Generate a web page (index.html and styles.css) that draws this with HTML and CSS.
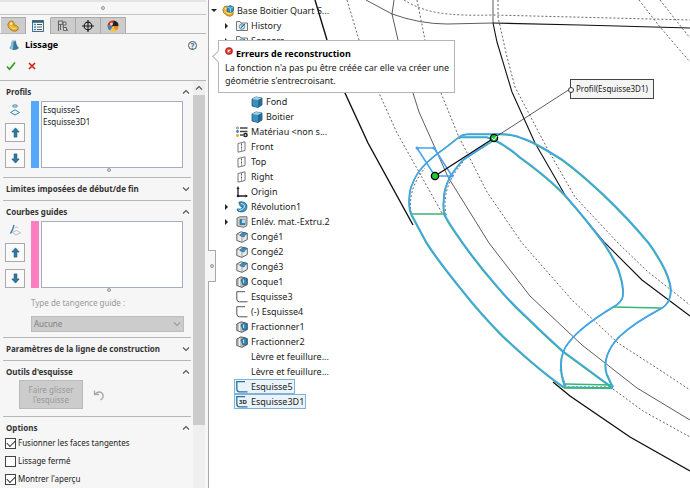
FILE: index.html
```html
<!DOCTYPE html>
<html lang="fr">
  <head>
    <meta charset="utf-8">
    <title>Lissage</title>
    <link rel="stylesheet" href="styles.css">
  </head>
  <body>
    <svg class="defs" aria-hidden="true">
      <symbol id="up" viewBox="0 0 12 12"><path d="M6 1 L10 5.5 H7.500 V11 H4.500 V5.500 H2 Z" fill="#2b7ba6" stroke="#174f72" stroke-width=".7"/></symbol>
      <symbol id="down" viewBox="0 0 12 12"><path d="M6 11 L10 6.500 H7.500 V1 H4.500 V6.500 H2 Z" fill="#2b7ba6" stroke="#174f72" stroke-width=".7"/></symbol>
      <symbol id="chevron" viewBox="0 0 8 6"><path d="M1 4.500 L4 1.500 L7 4.500" fill="none" stroke="#555" stroke-width="1.100"/></symbol>
      <symbol id="part" viewBox="0 0 12 12"><path d="M.8 4.500 L2.500 1.500 L5 1 L7 2.500 L7 5 L9.500 5.500 L11.300 7.500 L10.800 10 L8 11.300 L5 10.500 L1.500 7.500 Z" fill="#eeb02a" stroke="#9c6c10" stroke-width=".8"/><path d="M2.500 6 L6 8.500 L9.500 8" fill="none" stroke="#fbe08a"/><circle cx="4.200" cy="3.800" r="1.200" fill="#fff0b5"/></symbol>
      <symbol id="folder" viewBox="0 0 12 12"><path d="M.5 10.500 V1.500 H4 L5 3 H11.500 V10.500 Z" fill="#f2f2f2" stroke="#666" stroke-width=".9"/><circle cx="6" cy="6.600" r="2.700" fill="#d6ebf5" stroke="#37789a" stroke-width=".8"/><path d="M6 5 V7 L4.500 8 M9 4 L6 7" fill="none" stroke="#205d80" stroke-width=".9"/></symbol>
      <symbol id="body" viewBox="0 0 12 12"><path d="M1 3 L5 1 L11 2 V9 L7 11.500 L1 10 Z" fill="#3d8fb9" stroke="#1c5878" stroke-width=".8"/><path d="M1 3 L5 1 L11 2 L7 4 Z" fill="#9ed3ec"/><path d="M7 4 V11.500 L11 9 V2 Z" fill="#246c93"/></symbol>
      <symbol id="material" viewBox="0 0 12 12"><path d="M4 2 H11.500 M4 5.500 H11.500 M4 9 H7" stroke="#444" stroke-width="1.300"/><circle cx="1.500" cy="2" r="1" fill="#fff" stroke="#555" stroke-width=".7"/><circle cx="1.500" cy="5.500" r="1.400" fill="#3387b8"/><circle cx="1.500" cy="9.500" r="1.400" fill="#e2aa20"/><circle cx="9.500" cy="9" r="1.600" fill="#fff" stroke="#222" stroke-width="1.500"/></symbol>
      <symbol id="plane" viewBox="0 0 12 12"><path d="M2 2.500 L9 .8 V9.500 L2 11.200 Z" fill="#fff" stroke="#777"/><path d="M5.500 2.500 V9.500" stroke="#555" stroke-dasharray="2 1"/></symbol>
      <symbol id="origin" viewBox="0 0 12 12"><path d="M2 2 V10 H11" fill="none" stroke="#222" stroke-width="1.300"/><path d="M.5 3 L2 0 L3.500 3 Z M9.500 8.500 L12 10 L9.500 11.500 Z" fill="#222"/><circle cx="2" cy="10" r="1.300" fill="#222"/></symbol>
      <symbol id="revolve" viewBox="0 0 12 12"><path d="M3 1 Q10 0 11 5 Q11 11 5 11 Q1 11 1 8 Q5 9 7 6 Q3 6 3 1 Z" fill="#3d94bd" stroke="#1f6182" stroke-width=".8"/><path d="M5 2.500 Q9 3 8.500 6 Q7 9 3 9.500" fill="none" stroke="#c5e8f6"/></symbol>
      <symbol id="cut" viewBox="0 0 12 12"><path d="M1 2 L4 .7 H11 V9.500 L8 11.300 L1 10 Z" fill="#c9cdd0" stroke="#555" stroke-width=".8"/><path d="M4 3.500 H9 V8.500 H4 Z" fill="#3b8ab2" stroke="#215571" stroke-width=".6"/><path d="M6 3.500 H9 V7 H6 Z" fill="#b5dff2"/></symbol>
      <symbol id="fillet" viewBox="0 0 12 12"><path d="M.8 3 L5 .8 L11.300 2.500 V8.500 L6 11.400 L.8 9.500 Z" fill="#e8eaeb" stroke="#555" stroke-width=".9"/><path d="M4 4 Q6 1.500 8 1.500 L11.300 2.500 Q8.500 3.500 8 6 L4.500 5 Z" fill="#3b92bf" stroke="#1e5b7a" stroke-width=".6"/><path d="M6 6 V11 M.8 3 L4 4" stroke="#888" stroke-width=".7"/></symbol>
      <symbol id="shell" viewBox="0 0 12 12"><path d="M.8 3 L5 .8 L11.300 2.500 V8.500 L6 11.400 L.8 9.500 Z" fill="#b9bdc0" stroke="#555" stroke-width=".9"/><path d="M5 4 L8 1.700 L11 3 V8.500 L7 9 Z" fill="#378ab5" stroke="#1e5370" stroke-width=".7"/><path d="M3.500 2.500 V10" stroke="#f2f2f2" stroke-width="1.300"/><path d="M7.500 3.500 V7" stroke="#b9e0f1"/></symbol>
      <symbol id="sketch" viewBox="0 0 12 12"><path d="M9 .7 H.8 V8 Q.8 10.800 3.500 10.800 H11.500" fill="none" stroke="#555"/></symbol>
      <symbol id="sketch-on" viewBox="0 0 12 12"><path d="M9 .7 H.8 V8 Q.8 10.800 3.500 10.800 H11.500" fill="none" stroke="#23749c" stroke-width="1.300"/></symbol>
    </svg>

    <aside class="panel">
      <div class="grip"><span class="dot"></span></div>
      <nav class="tabs">
        <button class="tab" aria-label="Arbre"><svg class="tab-icon"><use href="#part"/></svg></button>
        <button class="tab active" aria-label="Propriétés"><svg class="tab-icon" viewBox="0 0 12 12"><rect x=".6" y=".6" width="10.800" height="10.800" fill="#fff" stroke="#315f7c"/><path d="M.6 1.800 H11.400" stroke="#315f7c" stroke-width="2"/><path d="M2 4.500 H4 M2 7 H4 M2 9.500 H4" stroke="#3d94c4" stroke-width="1.500"/><path d="M5 4.500 H10 M5 7 H10 M5 9.500 H10" stroke="#555"/></svg></button>
        <button class="tab" aria-label="Configurations"><svg class="tab-icon" viewBox="0 0 12 12"><path d="M1.500 11 V1 H5.500 V4.500 H1.500 M3.500 4.500 V10" fill="none" stroke="#666" stroke-width="1.100"/><path d="M6 2 H9 V5 H6.500 V7.500 H9.500 V10.500 H6.500 Z M9 8 L11 11" fill="#ddd" stroke="#666"/></svg></button>
        <button class="tab" aria-label="Cotes"><svg class="tab-icon" viewBox="0 0 12 12"><circle cx="6" cy="6" r="3.800" fill="none" stroke="#222" stroke-width="1.200"/><path d="M6 0 V12 M0 6 H12" stroke="#222" stroke-width="1.200"/></svg></button>
        <button class="tab" aria-label="Apparences"><svg class="tab-icon" viewBox="0 0 12 12"><circle cx="6" cy="6" r="5.500" fill="#f3c52e"/><path d="M6 6 L.6 5 A5.500 5.500 0 0 1 7 .6 Z" fill="#cf2c27"/><path d="M5 6 L7 .6 A5.500 5.500 0 0 1 11.500 6 Z" fill="#222"/><path d="M6 6 L.6 5 A5.500 5.500 0 0 0 3 10.600 Z" fill="#3c7ec8"/><path d="M6 6 L11.500 6 A5.500 5.500 0 0 1 9 10.600 Z" fill="#e8872a"/><circle cx="4.500" cy="4" r="1.400" fill="#fff" opacity=".8"/></svg></button>
      </nav>
      <header class="title">
        <svg class="title-icon" viewBox="0 0 12 12"><path d="M4 1.500 Q6 .3 8 1.500 Q8 6 11 9 Q9 11.500 5 11 L1.500 9 Q4 6 4 1.500 Z" fill="#39789b"/><path d="M1.500 9 Q4 6 4 1.500 L5.500 2 Q5.500 7 5 11 Z" fill="#8bbcd3"/><ellipse cx="6" cy="1.600" rx="2" ry=".9" fill="#b9d8e6"/></svg>
        <h1>Lissage</h1>
        <button class="help" aria-label="Aide">?</button>
      </header>
      <div class="confirm">
        <button aria-label="OK"><svg viewBox="0 0 10 10"><path d="M1 5.500 L3.500 8.300 L9 1.500" fill="none" stroke="#2f9a1f" stroke-width="1.600"/></svg></button>
        <button aria-label="Annuler"><svg viewBox="0 0 10 10"><path d="M2 2 L8 8 M8 2 L2 8" stroke="#d8211c" stroke-width="1.700"/></svg></button>
      </div>
      <div class="scroller">
        <div class="groups">
          <section class="group">
            <h2>Profils <svg class="chevron"><use href="#chevron"/></svg></h2>
            <div class="picker">
              <div class="tools">
                <svg class="tool-icon" viewBox="0 0 12 12"><ellipse cx="6" cy="2" rx="2.500" ry="1.100" fill="none" stroke="#3387ad"/><path d="M1.500 8.500 L6 5.800 L10.500 8.500 L6 11 Z" fill="none" stroke="#3387ad"/></svg>
                <button class="move" aria-label="Monter"><svg><use href="#up"/></svg></button>
                <button class="move" aria-label="Descendre"><svg><use href="#down"/></svg></button>
              </div>
              <div class="swatch blue"></div>
              <ul class="list"><li>Esquisse5</li><li>Esquisse3D1</li></ul>
            </div>
            <span class="dot"></span>
          </section>
          <section class="group">
            <h2>Limites imposées de début/de fin <svg class="chevron flip"><use href="#chevron"/></svg></h2>
          </section>
          <section class="group">
            <h2>Courbes guides <svg class="chevron"><use href="#chevron"/></svg></h2>
            <div class="picker">
              <div class="tools">
                <svg class="tool-icon" viewBox="0 0 12 12"><path d="M3.500 8.500 L7.500 6.500 L11.500 8.800 L7 11 Z M6 4 Q8 2 9 4" fill="none" stroke="#bbb"/><path d="M5 1 Q4 6 1.500 9.500" fill="none" stroke="#3380a5" stroke-width="1.300"/></svg>
                <button class="move" aria-label="Monter"><svg><use href="#up"/></svg></button>
                <button class="move" aria-label="Descendre"><svg><use href="#down"/></svg></button>
              </div>
              <div class="swatch pink"></div>
              <ul class="list"></ul>
            </div>
            <span class="dot"></span>
            <div class="field">
              <label for="tangence">Type de tangence guide :</label>
              <div class="select-wrap">
                <select id="tangence" disabled><option>Aucune</option></select>
                <svg class="chevron flip"><use href="#chevron"/></svg>
              </div>
            </div>
          </section>
          <section class="group">
            <h2>Paramètres de la ligne de construction <svg class="chevron flip"><use href="#chevron"/></svg></h2>
          </section>
          <section class="group">
            <h2>Outils d'esquisse <svg class="chevron"><use href="#chevron"/></svg></h2>
            <div class="drag">
              <button class="drag-btn" disabled>Faire glisser l'esquisse</button>
              <svg class="undo" viewBox="0 0 12 12"><path d="M1.500 1.500 V5.500 H6 M2 5 Q6 1.500 9 4 Q12 8 7.500 11" fill="none" stroke="#aaa" stroke-width="1.300"/></svg>
            </div>
          </section>
          <section class="group">
            <h2>Options <svg class="chevron"><use href="#chevron"/></svg></h2>
            <label class="check"><input type="checkbox" checked>Fusionner les faces tangentes</label>
            <label class="check"><input type="checkbox">Lissage fermé</label>
            <label class="check"><input type="checkbox" checked>Montrer l'aperçu</label>
          </section>
        </div>
        <div class="scrollbar">
          <svg class="chevron"><use href="#chevron"/></svg>
          <div class="thumb"></div>
        </div>
      </div>
    </aside>

    <main class="view">
      <svg class="model" viewBox="209 0 481 488" preserveAspectRatio="xMinYMin meet">
        <defs>
          <g id="loft">
            <path d="M613 388 L564 387 C545 374 520 352 503 336 C488 321 474 305 463 291 C450 275 438 260 427 243 L412 215 C408 208 409 190 413 183 C417 172 425 162 445 148 L459 137 Q463 134 469 134 L493 134 C510 133 518 136 530 141 C541 146 552 153 563 160 C585 176 620 208 649 243 C659 257 667 270 670 283 C673 295 669 305 660 309 C645 317 632 325 620 336 C608 348 603 362 607 374 L613 387"/>
            <path d="M495 139 C488 144 476 151 463 160 C455 169 444 182 444 200 Q443 208 445 215 C450 225 457 234 463 243 C473 257 484 271 497 286 C507 298 519 310 530 320 C541 331 552 341 563 351 L612 387"/>
            <path d="M459 137 H487 L495 140 C505 145 513 151 520 157 C538 170 552 181 565 195 C580 212 593 228 604 243 C611 254 617 262 620 274 C624 286 624 296 622 299 Q619 304 613 307 C600 315 580 328 570 341 C560 352 559 368 565 386"/>
          </g>
        </defs>
        <g class="edge bold">
          <path d="M315 0 L327 40 L345 93 L368 143 L413 225 M553 382 L570 396 L630 437 L690 471"/>
        </g>
        <g class="edge medium">
          <path d="M493 23 L497 42 L512 92 L535 143 L565 195 L605 243 L642 280 L690 316"/>
          <path d="M493 23 L580 25 L690 28"/>
        </g>
        <g class="edge thin">
          <path d="M394 0 L392 14 L398 40 L413 93 L419 112 L448 177 L489 243 L530 296 L582 345 L637 388 L690 420"/>
          <path d="M366 0 L392 14 Q420 24 447 24 L493 23"/>
          <path d="M493 0 V23"/>
        </g>
        <g class="edge dotted">
          <path d="M347 0 L359 40 L379 93 L397 133 L442 213 M613 389 L643 411 L690 437"/>
          <path d="M417 0 L425 40 L441 93 L458 135 L487 192 L522 243 L572 300 L618 343 L663 372 L690 390"/>
          <path d="M404 0 Q420 10 440 13 Q460 16 493 15 L690 20"/>
          <path d="M498 0 V17 L507 57 L515 87 L547 148 L575 197 L618 243 L647 271 L690 305"/>
          <path d="M639 0 L660 27 L690 62 M660 0 L690 38"/>
          <path d="M411 213 C409 198 412 184 425 168 M446 215 C443 198 446 182 463 162 M566 386 L560 370 M564 387 H612"/>
        </g>
        <use href="#loft" class="loft green" x="-.5" y=".6"/>
        <use href="#loft" class="loft sky"/>
        <path class="loft green" d="M412 214 H445 M613 307 L661 308 M565 384 L612 385 M564 388 H612"/>
        <path class="loft sky" d="M417 148 L434 148 L452 176 L435 176 Z"/>
        <path class="tips" d="M417 148 h.1 M434 148 h.1 M452 176 h.1 M445 215 h.1 M612 386 h.1"/>
        <path class="edge bold" d="M435 176 L494 138"/>
        <path class="edge thin" d="M494 138 L570 89"/>
        <circle class="handle" cx="435" cy="176" r="3.600"/>
        <circle class="handle" cx="494" cy="138" r="3.600"/>
        <path d="M492 138 l2 2 3 -4" fill="none" stroke="#fff"/>
      </svg>

      <ul class="tree">
        <li><span class="arrow open"></span><svg viewBox="0 0 12 12"><use href="#part"/><path d="M5 2 L8 .6 L11.500 1.800 V6 L8.500 7.500 L5 6.300 Z" fill="#3d92c4" stroke="#1c5878" stroke-width=".7"/><path d="M5 2 L8.500 3.200 L11.500 1.800 M8.500 3.200 V7.500" fill="none" stroke="#b9e0f1" stroke-width=".7"/></svg>Base Boitier Quart S...</li>
        <li class="l1"><span class="arrow"></span><svg><use href="#folder"/></svg>History</li>
        <li class="l1"><span class="arrow"></span><svg><use href="#folder"/></svg>Sensors</li>
        <li class="l2 bodies"><svg><use href="#body"/></svg>Fond</li>
        <li class="l2"><svg><use href="#body"/></svg>Boitier</li>
        <li class="l1 leaf"><svg><use href="#material"/></svg>Matériau &lt;non s...</li>
        <li class="l1 leaf"><svg><use href="#plane"/></svg>Front</li>
        <li class="l1 leaf"><svg><use href="#plane"/></svg>Top</li>
        <li class="l1 leaf"><svg><use href="#plane"/></svg>Right</li>
        <li class="l1 leaf"><svg><use href="#origin"/></svg>Origin</li>
        <li class="l1"><span class="arrow"></span><svg><use href="#revolve"/></svg>Révolution1</li>
        <li class="l1"><span class="arrow"></span><svg><use href="#cut"/></svg>Enlév. mat.-Extru.2</li>
        <li class="l1 leaf"><svg><use href="#fillet"/></svg>Congé1</li>
        <li class="l1 leaf"><svg><use href="#fillet"/></svg>Congé2</li>
        <li class="l1 leaf"><svg><use href="#fillet"/></svg>Congé3</li>
        <li class="l1 leaf"><svg><use href="#shell"/></svg>Coque1</li>
        <li class="l1 leaf"><svg><use href="#sketch"/></svg>Esquisse3</li>
        <li class="l1 leaf"><svg><use href="#sketch"/></svg>(-) Esquisse4</li>
        <li class="l1 leaf"><svg><use href="#shell"/></svg>Fractionner1</li>
        <li class="l1 leaf"><svg><use href="#shell"/></svg>Fractionner2</li>
        <li class="l1 leaf"><svg></svg>Lèvre et feuillure...</li>
        <li class="l1 leaf"><svg></svg>Lèvre et feuillure...</li>
        <li class="l1 leaf"><span class="picked"><svg><use href="#sketch-on"/></svg>Esquisse5</span></li>
        <li class="l1 leaf"><span class="picked"><svg viewBox="0 0 12 12"><use href="#sketch-on"/><text x="3" y="8" font-size="6" font-weight="bold" fill="#222">3D</text></svg>Esquisse3D1</span></li>
      </ul>

      <button class="collapse" aria-label="Réduire"><span class="dot"></span></button>

      <div class="tooltip" role="alert">
        <strong><svg viewBox="0 0 10 10"><circle cx="5" cy="5" r="4.500" fill="#d8281f" stroke="#8f1712" stroke-width=".6"/><path d="M3.200 3.200 L6.800 6.800 M6.800 3.200 L3.200 6.800" stroke="#fff" stroke-width="1.400"/></svg>Erreurs de reconstruction</strong>
        <p>La fonction n'a pas pu être créée car elle va créer une géométrie s'entrecroisant.</p>
      </div>

      <div class="callout">Profil(Esquisse3D1)</div>
    </main>
  </body>
</html>
```
FILE: styles.css
```css
* {
	box-sizing: border-box;
}
body {
	margin: 0;
	display: flex;
	height: 100vh;
	overflow: hidden;
	background: #fff;
	color: #222;
	font: 9px/12px "Noto Sans", "Open Sans", sans-serif;
}
h1, h2, p, ul {
	margin: 0;
	padding: 0;
}
ul {
	list-style: none;
}
button {
	padding: 0;
	border: none;
	background: none;
	font: inherit;
}
svg {
	display: block;
	flex: none;
}
.defs {
	position: absolute;
	width: 0;
	height: 0;
}
.dot {
	display: block;
	width: 4px;
	height: 4px;
	border: 1px solid #999;
	border-radius: 50%;
	background: #ddd;
}

/* left panel */
.panel {
	flex: none;
	width: 209px;
	display: flex;
	flex-direction: column;
	background: #f6f6f6;
	border-right: 1px solid #a8a8a8;
}
.grip {
	height: 15px;
	flex: none;
	display: flex;
	align-items: center;
	justify-content: center;
	margin: 0 2px 2px 0;
	border-top: 2px solid #e4e4e4;
	border-bottom: 1px solid #c4c4c4;
}
.tabs {
	display: flex;
	flex: none;
	height: 17px;
	padding-left: 1px;
	margin-right: 2px;
	border-bottom: 1px solid #b8b8b8;
}
.tab {
	width: 25px;
	display: flex;
	align-items: center;
	justify-content: center;
	background: #ccc;
	border: 1px solid #aaa;
	border-width: 1px 1px 0 0;
}
.tab.active {
	background: #f6f6f6;
	border-top-color: #f6f6f6;
	height: 17px;
}
.tab-icon {
	width: 12px;
	height: 12px;
}
.title {
	display: flex;
	align-items: center;
	height: 22px;
	flex: none;
	padding: 0 11px 0 8px;
}
.title-icon {
	width: 12px;
	height: 12px;
	margin-right: 5px;
}
h1 {
	flex: 1;
	font-size: 9px;
	color: #000;
}
.help {
	width: 9px;
	height: 9px;
	border: 1px solid #456;
	border-radius: 50%;
	font-size: 8px;
	font-weight: bold;
	line-height: 7px;
	color: #2d6f96;
}
.confirm {
	display: flex;
	gap: 11px;
	flex: none;
	height: 25px;
	padding: 5px 6px;
	margin-right: 2px;
	border-bottom: 1px solid #b8b8b8;
}
.confirm button,
.confirm svg {
	width: 10px;
	height: 10px;
}
.scroller {
	flex: 1;
	min-height: 0;
	display: flex;
}
.groups {
	flex: 1;
	min-width: 0;
	overflow: hidden;
	padding: 0 2px 0 3px;
}
.group {
	padding-bottom: 5px;
	border-bottom: 1px solid #b8b8b8;
}
.group:last-child {
	border-bottom: none;
}
h2 {
	display: flex;
	align-items: center;
	justify-content: space-between;
	height: 17px;
	padding: 4px 1px 0 3px;
	font-size: 8px;
	line-height: 12px;
	color: #333;
	white-space: nowrap;
}
.chevron {
	width: 8px;
	height: 6px;
}
.flip {
	transform: rotate(180deg);
}
.picker {
	display: flex;
	height: 67px;
	margin: 3px 8px 0 2px;
}
.tools {
	display: flex;
	flex-direction: column;
	justify-content: space-between;
	width: 20px;
	margin-right: 6px;
}
.tool-icon {
	width: 12px;
	height: 12px;
	margin: 3px 4px 0;
}
.move {
	display: flex;
	align-items: center;
	justify-content: center;
	width: 20px;
	height: 19px;
	border: 1px solid #aaa;
	background: #fafafa;
}
.move svg {
	width: 11px;
	height: 11px;
}
.swatch {
	width: 8px;
	margin-right: 2px;
}
.blue {
	background: #54a8fb;
}
.pink {
	background: #fd7fc0;
}
.list {
	flex: 1;
	padding: 2px 1px;
	border: 1px solid #a3adc4;
	background: #fff;
	font-size: 8px;
}
.group > .dot {
	margin: 0 auto;
	position: relative;
	left: 12px;
}
.field {
	padding: 5px 7px 0 28px;
	font-size: 8px;
	color: #999;
}
.select-wrap {
	display: flex;
	align-items: center;
	margin-top: 7px;
	height: 16px;
	padding-right: 2px;
	border: 1px solid #bbb;
	background: #ccc;
}
select {
	flex: 1;
	appearance: none;
	border: none;
	padding: 0 2px;
	background: none;
	font: inherit;
	color: #808080;
	opacity: 1;
}
.select-wrap .chevron {
	opacity: .4;
}
.drag {
	display: flex;
	align-items: center;
	gap: 10px;
	padding: 2px 0 2px 16px;
}
.drag-btn {
	width: 64px;
	height: 29px;
	padding: 0 8px;
	border: 1px solid #bbb;
	background: #ccc;
	color: #999;
	font-size: 8px;
	line-height: 10px;
}
.undo {
	width: 12px;
	height: 12px;
}
.check {
	display: flex;
	align-items: center;
	gap: 2px;
	height: 18px;
	padding-left: 2px;
	font-size: 8px;
}
.check input {
	appearance: none;
	margin: 0;
	width: 11px;
	height: 11px;
	border: 1px solid #444;
	background: #fff;
}
.check input:checked::after {
	content: "";
	display: block;
	width: 7px;
	height: 4px;
	margin: 1px;
	border: solid #333;
	border-width: 0 0 1px 1px;
	transform: rotate(-45deg);
}
.scrollbar {
	display: flex;
	flex-direction: column;
	align-items: center;
	width: 12px;
	margin-right: 3px;
	padding-top: 4px;
	gap: 4px;
	background: #efefef;
}
.thumb {
	width: 12px;
	height: 82%;
	background: #cbcbcb;
}

/* graphics area */
.view {
	flex: 1;
	min-width: 0;
	position: relative;
}
.model {
	position: absolute;
	inset: 0;
	width: 100%;
	height: 100%;
}
.edge {
	fill: none;
	stroke: #111;
}
.bold {
	stroke-width: 1.400;
}
.medium {
	stroke-width: 1.100;
}
.thin {
	stroke: #333;
	stroke-width: .8;
}
.dotted {
	stroke: #555;
	stroke-width: .9;
	stroke-dasharray: 2 2;
}
.loft {
	fill: none;
	stroke-width: 1.500;
	stroke-linejoin: round;
}
.green {
	stroke: #35b873;
}
.sky {
	stroke: #46a2f5;
}
.tips {
	stroke: #46a2f5;
	stroke-width: 3;
	stroke-linecap: round;
}
.handle {
	fill: #1fc837;
	stroke: #000;
	stroke-width: 1.300;
}
.tree {
	position: relative;
	padding-top: 3px;
	font-size: 9px;
	line-height: 15px;
	white-space: nowrap;
	width: max-content;
}
.tree li {
	display: flex;
	align-items: center;
	height: 15px;
	padding-left: 2px;
}
.tree svg {
	width: 12px;
	height: 12px;
	margin-right: 3px;
}
.tree .l1 {
	padding-left: 16px;
}
.tree .leaf {
	padding-left: 27px;
}
.tree .l2 {
	padding-left: 42px;
}
/* leaves room for the tooltip */
.tree .bodies {
	margin-top: 46px;
}
.arrow {
	width: 11px;
}
.arrow::before {
	content: "";
	display: block;
	width: 0;
	border: 3px solid transparent;
	border-left: 3px solid #222;
	border-right: none;
}
.arrow.open::before {
	border: 3px solid transparent;
	border-top: 3px solid #222;
	border-bottom: none;
}
.picked {
	display: flex;
	align-items: center;
	height: 15px;
	margin-left: -2px;
	padding: 0 1px;
	border: 1px solid #7fb2d6;
	background: #eaf3fa;
}
.collapse {
	position: absolute;
	left: -1px;
	top: 250px;
	width: 8px;
	height: 32px;
	display: flex;
	align-items: center;
	justify-content: center;
	border: 1px solid #a8a8a8;
	border-left: none;
	background: #f6f6f6;
}
.tooltip {
	position: absolute;
	left: 9px;
	top: 40px;
	width: 237px;
	padding: 6px 0 5px 6px;
	border: 1px solid #b5b5b5;
	background: #fff;
	font-size: 9px;
	line-height: 13px;
}
.tooltip::before {
	content: "";
	position: absolute;
	left: -5px;
	top: 11px;
	width: 8px;
	height: 8px;
	border: solid #b5b5b5;
	border-width: 0 0 1px 1px;
	background: #fff;
	transform: rotate(45deg);
}
.tooltip strong {
	display: flex;
	gap: 3px;
	color: #000;
}
.tooltip p {
	margin-top: 1px;
}
.tooltip svg {
	width: 8px;
	height: 8px;
}
.callout {
	position: absolute;
	left: 361px;
	top: 79px;
	padding: 3px 5px;
	border: 1px solid #444;
	background: #f4f4f4;
	font-size: 8px;
}
.callout::before {
	content: "";
	position: absolute;
	left: -3px;
	top: 7px;
	width: 4px;
	height: 4px;
	border: 1px solid #333;
	border-radius: 50%;
	background: #fff;
}
```
